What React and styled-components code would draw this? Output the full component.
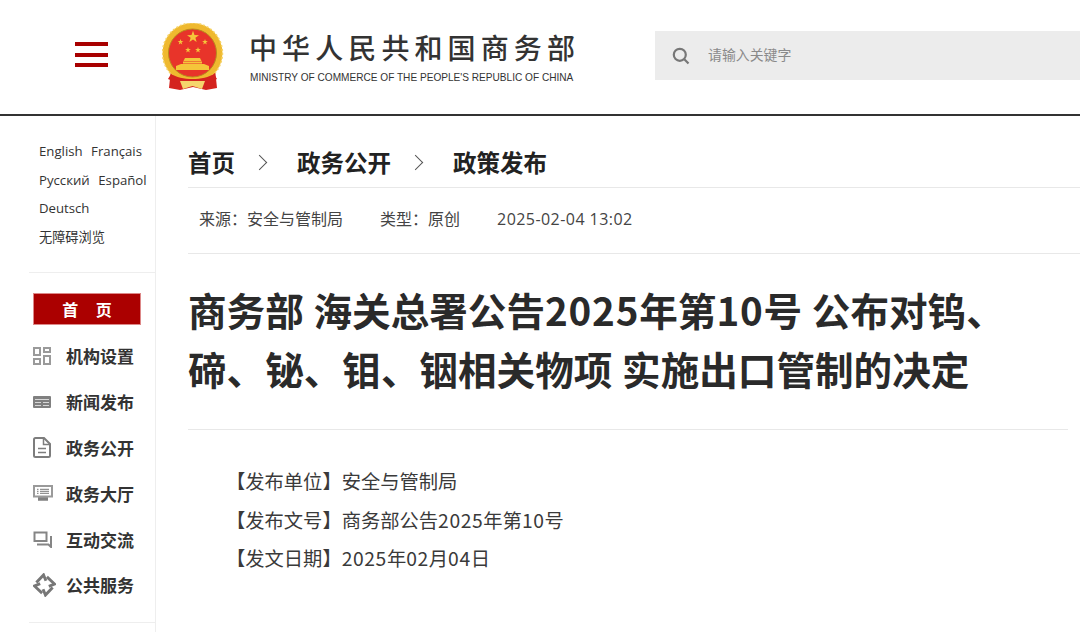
import React from "react";
import styled, { createGlobalStyle } from "styled-components";

const GlobalStyle = createGlobalStyle`
  html, body {
    margin: 0;
    padding: 0;
    background: #fff;
    overflow: hidden;
  }
  body {
    font-family: "Open Sans", "Noto Sans CJK SC", sans-serif;
    color: #333;
  }
`;

const langRows = [["English", "Français"], ["Русский", "Español"], ["Deutsch"], ["无障碍浏览"]];

const navItems = [
  { name: "机构设置", icon: <GridIcon /> },
  { name: "新闻发布", icon: <NewsIcon /> },
  { name: "政务公开", icon: <DocIcon /> },
  { name: "政务大厅", icon: <ScreenIcon /> },
  { name: "互动交流", icon: <ChatIcon /> },
  { name: "公共服务", icon: <ServiceIcon /> },
];

function GridIcon() {
  return (
    <svg width="18" height="18" viewBox="0 0 18 18" fill="none" stroke="#9a9a9a" strokeWidth="2">
      <rect x="1" y="1" width="6" height="7" />
      <rect x="11" y="1" width="6" height="4" />
      <rect x="1" y="12" width="6" height="5" />
      <rect x="11" y="9" width="6" height="8" />
    </svg>
  );
}

function NewsIcon() {
  return (
    <svg width="18" height="12" viewBox="0 0 18 12">
      <rect x="0" y="0" width="18" height="12" rx="1" fill="#808080" />
      <path d="M2 3.500h14M2 6.500h6M10 6.500h6M2 9.500h6M10 9.500h6" stroke="#d8d8d8" strokeWidth="1" />
    </svg>
  );
}

function DocIcon() {
  return (
    <svg width="18" height="21" viewBox="0 0 18 21" fill="none" stroke="#7d7d7d" strokeWidth="2">
      <path d="M2.500 1h8.500l6 6v11.500a1.500 1.500 0 0 1-1.500 1.500h-13a1.500 1.500 0 0 1-1.500-1.500v-16a1.500 1.500 0 0 1 1.500-1.500z" />
      <path d="M10.500 1v6.500h6.500" strokeWidth="1.500" />
      <path d="M5 11.500h8M5 15.500h8" strokeWidth="1.500" />
    </svg>
  );
}

function ScreenIcon() {
  return (
    <svg width="20" height="16" viewBox="0 0 20 16" fill="none" stroke="#9a9a9a">
      <rect x="1" y="1" width="18" height="10.500" strokeWidth="2" />
      <path d="M4 4.300h1.500M7 4.300h9M4 6.300h1.500M7 6.300h9M4 8.300h1.500M7 8.300h9" strokeWidth="1" stroke="#777" />
      <path d="M5 14h10" strokeWidth="3.500" stroke="#808080" />
    </svg>
  );
}

function ChatIcon() {
  return (
    <svg width="19" height="17" viewBox="0 0 19 17" fill="none" stroke="#858585" strokeWidth="2">
      <path d="M1.500 1.500h12v8.500h-12z" />
      <path d="M4 13.500h11.500l2.500 2.500V5" />
    </svg>
  );
}

function ServiceIcon() {
  return (
    <svg width="23" height="24" viewBox="0 0 24 24" fill="none" stroke="#777" strokeWidth="3">
      {[0, 90, 180, 270].map((deg) => (
        <path key={deg} d="M3.500 9.500 11 1.500 13.500 7.500" transform={`rotate(${deg} 12 12)`} />
      ))}
    </svg>
  );
}

function Emblem() {
  const star = "M0-5 1.200-1.600 4.800-1.500 1.900.6 2.900 4 0 2 -2.900 4 -1.900.6 -4.800-1.500 -1.200-1.600z";
  return (
    <svg width="62" height="68" viewBox="0 0 62 68">
      <path d="M9 46 7 65l11 2 13-3 13 3 11-2-2-19z" fill="#d4231e" />
      <circle cx="30.500" cy="30" r="30" fill="#efb92f" />
      <circle cx="30.500" cy="30" r="30" fill="none" stroke="#f6d468" strokeWidth="1.500" strokeDasharray="2 2" />
      <circle cx="30.500" cy="30" r="24" fill="#e8342a" stroke="#b98a1d" strokeWidth="1" />
      <g fill="#f5c53a">
        <path d={star} transform="translate(31 14) scale(1.250)" />
        <path d={star} transform="translate(18.500 19) scale(.6)" />
        <path d={star} transform="translate(43 19) scale(.6)" />
        <path d={star} transform="translate(26 27) scale(.6)" />
        <path d={star} transform="translate(36 27) scale(.6)" />
        <path d="M23 35h15l1.500 3h-18zM21 38.500h19v2H21zM14 43l5-2h23l5 2v4H14z" />
      </g>
      <path d="M9 51c5 3 13 5 21.500 5S47 54 52 51l3 5c-6 3-15 5-24.500 5S12 59 6 56z" fill="#d4231e" />
      <path d="M18 58h25l-3 8-9.500-3-9.500 3z" fill="#f5d56c" />
    </svg>
  );
}

export default function App() {
  return (
    <Page>
      <GlobalStyle />
      <Header>
        <MenuButton>
          <span />
          <span />
          <span />
        </MenuButton>
        <EmblemSlot>
          <Emblem />
        </EmblemSlot>
        <Brand>
          <BrandName>中华人民共和国商务部</BrandName>
          <BrandSub>MINISTRY OF COMMERCE OF THE PEOPLE'S REPUBLIC OF CHINA</BrandSub>
        </Brand>
        <Search>
          <svg width="18" height="18" viewBox="0 0 18 18" fill="none" stroke="#777" strokeWidth="2.200">
            <circle cx="7.800" cy="7.800" r="6" />
            <path d="M12.300 12.300 16.500 16.500" />
          </svg>
          <SearchInput placeholder="请输入关键字" />
        </Search>
      </Header>
      <Body>
        <Sidebar>
          <Langs>
            {langRows.map((row) => (
              <LangRow key={row[0]}>
                {row.map((l) => (
                  <span key={l}>{l}</span>
                ))}
              </LangRow>
            ))}
          </Langs>
          <Nav>
            <HomeLink>首 页</HomeLink>
            {navItems.map((item) => (
              <NavItem key={item.name}>
                <NavIcon>{item.icon}</NavIcon>
                {item.name}
              </NavItem>
            ))}
          </Nav>
        </Sidebar>
        <Main>
          <Crumbs>
            <span>首页</span>
            <Chevron />
            <span>政务公开</span>
            <Chevron />
            <span>政策发布</span>
          </Crumbs>
          <Meta>
            <span>来源：安全与管制局</span>
            <span>类型：原创</span>
            <MetaDate>2025-02-04 13:02</MetaDate>
          </Meta>
          <Title>
            商务部 海关总署公告<Digits>2025</Digits>年第<Digits>10</Digits>号 公布对钨、
            <br />
            碲、铋、钼、铟相关物项 实施出口管制的决定
          </Title>
          <Article>
            <p>【发布单位】安全与管制局</p>
            <p>【发布文号】商务部公告<ArticleDigits>2025</ArticleDigits>年第<ArticleDigits>10</ArticleDigits>号</p>
            <p>【发文日期】<ArticleDigits>2025</ArticleDigits>年<ArticleDigits>02</ArticleDigits>月<ArticleDigits>04</ArticleDigits>日</p>
          </Article>
        </Main>
      </Body>
    </Page>
  );
}

const Page = styled.div`
  width: 1080px;
  height: 632px;
  overflow: hidden;
  display: flex;
  flex-direction: column;
`;

const Header = styled.header`
  height: 116px;
  flex: none;
  box-sizing: border-box;
  border-bottom: 2px solid #333;
  display: flex;
  align-items: flex-start;
`;

const MenuButton = styled.div`
  width: 33px;
  margin: 42px 0 0 75px;
  display: flex;
  flex-direction: column;
  gap: 6.500px;
  span {
    height: 4px;
    background: #a80000;
  }
`;

const EmblemSlot = styled.div`
  margin: 23px 0 0 54px;
  line-height: 0;
`;

const Brand = styled.div`
  margin: 28px 0 0 26px;
  width: 340px;
`;

const BrandName = styled.div`
  font-family: "Noto Sans CJK SC", sans-serif;
  font-size: 28px;
  font-weight: 500;
  line-height: 38px;
  letter-spacing: 5.100px;
  margin-left: -1px;
  color: #333;
  white-space: nowrap;
`;

const BrandSub = styled.div`
  font-family: "Liberation Sans", sans-serif;
  font-size: 10.100px;
  line-height: 14px;
  margin-top: 5px;
  color: #333;
  white-space: nowrap;
`;

const Search = styled.div`
  margin: 31px 0 0 65px;
  width: 425px;
  height: 49px;
  background: #ececec;
  display: flex;
  align-items: center;
  padding-left: 17px;
  box-sizing: border-box;
`;

const SearchInput = styled.input`
  margin-left: 18px;
  padding: 0 0 4px;
  border: none;
  outline: none;
  background: transparent;
  font-family: "Noto Sans CJK SC", sans-serif;
  font-size: 13.900px;
  flex: 1;
  &::placeholder {
    color: #8a8a8a;
  }
`;

const Body = styled.div`
  flex: 1;
  display: flex;
  min-height: 0;
`;

const Sidebar = styled.aside`
  width: 156px;
  flex: none;
  box-sizing: border-box;
  border-right: 1px solid #eee;
  padding: 21px 0 0 29px;
`;

const Langs = styled.div`
  padding: 0 0 21px 10px;
  border-bottom: 1px solid #eee;
  font-size: 13.200px;
  color: #333;
`;

const LangRow = styled.div`
  height: 28.500px;
  line-height: 28.500px;
  display: flex;
  gap: 8.500px;
  white-space: nowrap;
`;

const Nav = styled.nav`
  padding: 20px 14px 14px 4px;
  border-bottom: 1px solid #eee;
`;

const HomeLink = styled.div`
  height: 32px;
  line-height: 30px;
  background: #ab0000;
  border: 1px solid #d88;
  box-sizing: border-box;
  color: #fff;
  font-family: "Noto Sans CJK SC", sans-serif;
  font-size: 16px;
  font-weight: 700;
  text-align: center;
  word-spacing: 14px;
`;

const NavItem = styled.div`
  height: 45.800px;
  display: flex;
  align-items: center;
  font-family: "Noto Sans CJK SC", sans-serif;
  font-size: 17px;
  font-weight: 700;
  color: #333;
  &:nth-child(2) {
    margin-top: 8px;
  }
`;

const NavIcon = styled.span`
  width: 33px;
  flex: none;
  display: flex;
  line-height: 0;
`;

const Main = styled.main`
  flex: 1;
  min-width: 0;
  padding-left: 32px;
`;

const Crumbs = styled.div`
  height: 72px;
  padding-top: 29px;
  box-sizing: border-box;
  border-bottom: 1px solid #e8e8e8;
  display: flex;
  align-items: flex-start;
  font-family: "Noto Sans CJK SC", sans-serif;
  font-size: 23.500px;
  line-height: 34px;
  font-weight: 700;
  color: #222;
`;

const Chevron = styled.i`
  width: 10px;
  height: 10px;
  margin: 12px 32px 0 19px;
  border-top: 1.500px solid #555;
  border-right: 1.500px solid #555;
  transform: rotate(45deg);
`;

const Meta = styled.div`
  height: 66px;
  padding: 18px 0 0 11px;
  box-sizing: border-box;
  border-bottom: 1px solid #e8e8e8;
  display: flex;
  gap: 37px;
  font-family: "Open Sans", "Noto Sans CJK SC", sans-serif;
  font-size: 16px;
  line-height: 26px;
  color: #444;
`;

const MetaDate = styled.span`
  letter-spacing: 0.450px;
`;

const Title = styled.h1`
  margin: 0 12px 0 0;
  height: 176px;
  padding-top: 26px;
  box-sizing: border-box;
  border-bottom: 1px solid #e8e8e8;
  font-family: "Noto Sans CJK SC", sans-serif;
  font-size: 38.600px;
  line-height: 59px;
  font-weight: 700;
  word-spacing: 1px;
  color: #2a2a2a;
  white-space: nowrap;
`;

const Digits = styled.span`
  letter-spacing: 0.800px;
`;

const Article = styled.div`
  padding: 32px 0 0 38px;
  font-family: "Noto Sans CJK SC", "Open Sans", sans-serif;
  font-size: 19.300px;
  line-height: 38.500px;
  color: #3a3a3a;
  p {
    margin: 0;
  }
`;

const ArticleDigits = styled.span`
  letter-spacing: 0.600px;
`;
